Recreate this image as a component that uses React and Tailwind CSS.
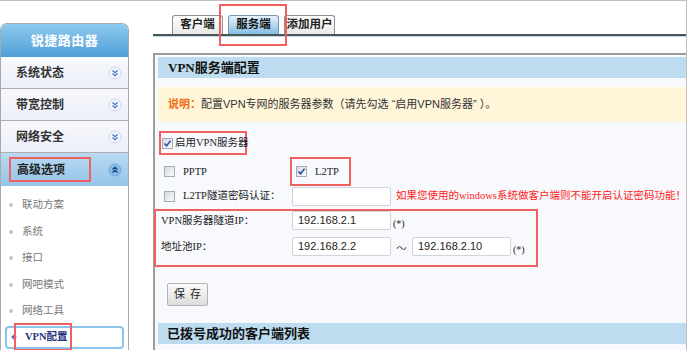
import React from 'react';

const SERIF = "[font-family:'Liberation_Serif','Noto_Sans_CJK_SC',serif]";
const SANS = "[font-family:'Liberation_Sans','Noto_Sans_CJK_SC',sans-serif]";

function Chevron({ up }) {
  return (
    <svg width="14" height="14" viewBox="0 0 14 14">
      <circle cx="7" cy="7" r="6" fill={up ? '#86bde6' : '#f3f6fc'} stroke={up ? '#6ea7d6' : '#cbd6ea'} />
      <path
        d={up ? 'M4.5 6.5L7 4.3L9.5 6.5M4.5 9.5L7 7.3L9.5 9.5' : 'M4.5 4.5L7 6.7L9.5 4.5M4.5 7.5L7 9.7L9.5 7.5'}
        fill="none"
        stroke={up ? '#1c3f7c' : '#3f78c6'}
        strokeWidth="1.3"
      />
    </svg>
  );
}

function Box({ checked }) {
  return (
    <span className="inline-flex w-[11px] h-[11px] shrink-0 items-center justify-center border border-[#a3abb5] bg-linear-to-br from-[#d6dbe1] to-[#fafafa]">
      {checked && (
        <svg width="9" height="9" viewBox="0 0 9 9">
          <path d="M1.5 4.5L3.6 6.8L7.6 1.6" fill="none" stroke="#23479a" strokeWidth="1.5" />
        </svg>
      )}
    </span>
  );
}

function IpInput({ value }) {
  return (
    <div className={`w-[99px] h-[19px] shrink-0 flex items-center pl-[5px] bg-white border border-[#cfd4da] rounded-[2px] text-[11px] text-[#222] ${SANS}`}>
      {value}
    </div>
  );
}

const menus = ['系统状态', '带宽控制', '网络安全'];
const subs = ['联动方案', '系统', '接口', '网吧模式', '网络工具'];

function Sidebar() {
  return (
    <div className="w-[129px] shrink-0 mt-[22px] h-[327px] border-l border-r border-t border-[#a9a9a9] rounded-t-[7px] overflow-hidden flex flex-col">
      <div className="h-[33px] shrink-0 flex items-center justify-center bg-linear-to-b from-[#8ecaef] to-[#4f9fd8] text-white text-[13px] font-bold tracking-[0.5px]">
        锐捷路由器
      </div>
      {menus.map((m) => (
        <div key={m} className="h-[32px] shrink-0 flex items-center justify-between pl-[15px] pr-[6px] border-b border-[#aeaeae] bg-linear-to-b from-[#f8f9fd] to-[#eceff8] text-[12px] font-bold text-[#333]">
          <span>{m}</span>
          <Chevron />
        </div>
      ))}
      <div className="h-[33px] shrink-0 flex items-center justify-between pl-[8px] pr-[6px] bg-linear-to-b from-[#b9d9f1] to-[#94c4e8] text-[12px] font-bold text-[#222]">
        <span className="w-[82px] h-[25px] flex items-center pl-[6px] border-2 border-[#f06060]">高级选项</span>
        <Chevron up />
      </div>
      <div className="flex flex-col pt-[6px] bg-white">
        {subs.map((s) => (
          <div key={s} className="h-[26.5px] shrink-0 flex items-center pl-[8px] text-[10.5px] text-[#777]">
            <span className="w-[4px] h-[4px] rounded-full bg-[#c4c4c4] mr-[9px]" />
            {s}
          </div>
        ))}
        <div className="relative mt-[1px] mx-[4px] h-[23px] flex items-center pl-[5px] border-2 border-[#8cc3e8] rounded-[4px]">
          <span className="w-[4px] h-[4px] rotate-45 bg-[#6b5bc4] mr-[9px]" />
          <span className={`text-[10.5px] font-bold text-[#24337e] ${SERIF}`}>VPN配置</span>
          <span className="absolute left-[7px] -top-[5px] w-[58px] h-[28px] border-2 border-[#f06060]" />
        </div>
      </div>
    </div>
  );
}

function Tabs() {
  return (
    <div className="relative">
      <div className="flex items-end gap-[5px] pl-[19px] pt-[14px] border-b-2 border-[#4a564e]">
        <div className="w-[51px] h-[19px] flex items-center justify-center rounded-t-[3px] border border-b-0 border-[#8f8f8f] bg-linear-to-b from-[#ffffff] to-[#e9e9e9] text-[11.5px] font-bold text-[#222]">
          客户端
        </div>
        <div className="w-[51px] h-[19px] flex items-center justify-center rounded-t-[3px] border border-b-0 border-[#7896b4] bg-linear-to-b from-[#e7f3fc] to-[#86bce4] text-[11.5px] font-bold text-[#111]">
          服务端
        </div>
        <div className="w-[51px] h-[19px] flex items-center justify-center rounded-t-[3px] border border-b-0 border-[#8f8f8f] bg-linear-to-b from-[#ffffff] to-[#e9e9e9] text-[11.5px] font-bold text-[#222]">
          添加用户
        </div>
      </div>
      <div className="h-[1px] bg-[#b9daef]" />
      <span className="absolute left-[66px] top-[3px] w-[68px] h-[42px] border-2 border-[#f06060]" />
    </div>
  );
}

function Panel() {
  return (
    <div className="mt-[16px] flex-1 border-l-2 border-t-2 border-[#9d9d9d] bg-[#f7f9fd] pl-[3px] pt-[2px] flex flex-col">
      <div className={`h-[21px] shrink-0 flex items-center pl-[10px] bg-[#bddcef] text-[13px] font-bold text-[#111] ${SERIF}`}>
        VPN服务端配置
      </div>
      <div className="h-[9px] shrink-0" />
      <div className={`h-[35px] shrink-0 flex items-center pl-[10px] bg-[#fff5d9] text-[11px] text-[#333] whitespace-nowrap ${SANS}`}>
        <span className="font-bold text-[#f26a10]">说明：</span>
        <span>配置VPN专网的服务器参数（请先勾选 “启用VPN服务器” ）。</span>
      </div>

      <div className={`flex flex-col text-[10.5px] text-[#222] ${SERIF}`}>
        <div className="mt-[9px] ml-[1px] w-[88px] h-[24px] flex items-center gap-[2px] pl-[1px] border-2 border-[#f06060] whitespace-nowrap">
          <Box checked />
          <span>启用VPN服务器</span>
        </div>

        <div className="mt-[2px] h-[29px] flex items-center">
          <div className="w-[132px] flex items-center gap-[8px] pl-[6px]">
            <Box />
            <span>PPTP</span>
          </div>
          <div className="w-[61px] h-[29px] flex items-center gap-[8px] pl-[4px] border-2 border-[#f06060]">
            <Box checked />
            <span>L2TP</span>
          </div>
        </div>

        <div className="h-[20px] flex items-center">
          <div className="w-[134px] flex items-center gap-[8px] pl-[6px] whitespace-nowrap">
            <Box />
            <span>L2TP隧道密码认证：</span>
          </div>
          <IpInput value="" />
          <span className="ml-[5px] text-[#ff1a1a] whitespace-nowrap">如果您使用的windows系统做客户端则不能开启认证密码功能！</span>
        </div>

        <div className="mt-[3px] -ml-[4px] w-[384px] h-[58px] border-2 border-[#f06060] flex flex-col pl-[5px]">
          <div className="h-[19px] flex items-center">
            <span className="w-[131px]">VPN服务器隧道IP：</span>
            <IpInput value="192.168.2.1" />
            <span className="ml-[2px] mt-[6px] text-[10px]">(*)</span>
          </div>
          <div className="mt-[7px] h-[19px] flex items-center">
            <span className="w-[131px]">地址池IP：</span>
            <IpInput value="192.168.2.2" />
            <span className="w-[21px] text-center mt-[4px] text-[#555]">～</span>
            <IpInput value="192.168.2.10" />
            <span className="ml-[2px] mt-[6px] text-[10px]">(*)</span>
          </div>
        </div>

        <button className="mt-[16px] ml-[9px] w-[41px] h-[23px] flex items-center justify-center gap-[5px] border border-[#b3b3b3] rounded-[2px] bg-linear-to-b from-[#fbfbfb] to-[#dddddd] text-[11px] text-[#222]">
          <span>保</span>
          <span>存</span>
        </button>
      </div>

      <div className={`mt-[17px] h-[21px] shrink-0 flex items-center pl-[9px] bg-[#bddcef] text-[13px] font-bold text-[#111] ${SERIF}`}>
        已拨号成功的客户端列表
      </div>
    </div>
  );
}

export default function App() {
  return (
    <div className={`w-[687px] h-[350px] overflow-hidden bg-white border-t border-r border-[#bdbdbd] flex ${SANS}`}>
      <Sidebar />
      <div className="ml-[24px] flex-1 flex flex-col min-w-0">
        <Tabs />
        <Panel />
      </div>
    </div>
  );
}
